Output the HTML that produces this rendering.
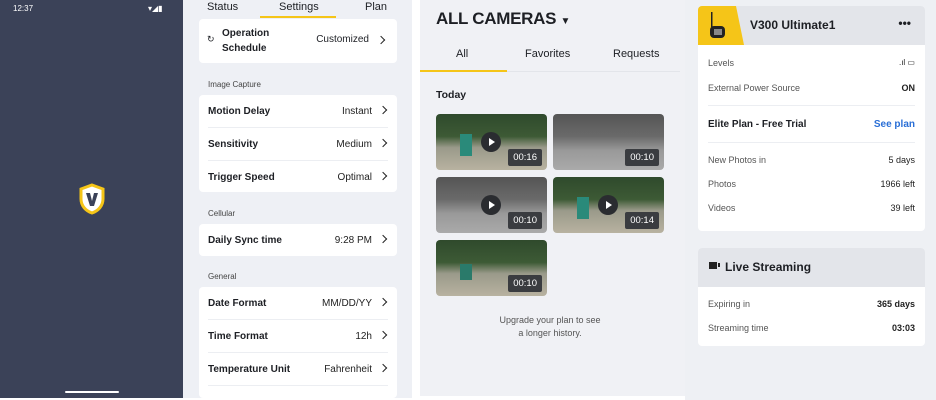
<!DOCTYPE html>
<html><head><meta charset="utf-8"><style>
*{margin:0;padding:0;box-sizing:border-box}
body{width:936px;height:400px;background:#fff;font-family:"Liberation Sans",sans-serif;position:relative;overflow:hidden;color:#1d1f24}
.a{position:absolute}
.dark{left:0;top:0;width:183px;height:398px;background:#3b4258}
.set{left:183px;top:0;width:229px;height:398px;background:#eef0f5}
.cam{left:420px;top:0;width:265px;height:396px;background:#f0f1f5}
.rt{left:685px;top:0;width:251px;height:400px;background:#eef0f4}
.card{background:#fff;border-radius:4px}
.row{position:absolute;left:9px;right:9px;height:33px;display:flex;align-items:center;font-size:10px;border-bottom:1px solid #eceef2}
.row b{font-weight:bold}
.row .v{margin-left:auto;margin-right:16px;color:#222}
.row .c{position:absolute;right:2px;top:12px;width:6px;height:6px;border-top:1.3px solid #222;border-right:1.3px solid #222;transform:rotate(45deg)}
.lbl{font-size:8px;color:#444}
.th{position:absolute;width:111px;height:56px;border-radius:4px;overflow:hidden}
.g{background:linear-gradient(180deg,#2f4a2c 0%,#3d5a35 40%,#9a9a8a 60%,#b8b2a0 100%)}
.gr{background:linear-gradient(180deg,#555 0%,#6a6a6a 40%,#999 65%,#aaa 100%)}
.dur{position:absolute;right:5px;bottom:4px;background:#3a3c40;color:#fff;font-size:9.5px;padding:3px 5px;border-radius:2px}
.play{position:absolute;left:45px;top:18px;width:20px;height:20px;border-radius:50%;background:#2a2c30}
.play:after{content:"";position:absolute;left:8px;top:6px;border-left:6px solid #fff;border-top:4px solid transparent;border-bottom:4px solid transparent}
.rr{position:absolute;left:10px;right:10px;font-size:9px;display:flex;color:#555}
.rr span:last-child{margin-left:auto;color:#222}
</style></head><body>
<div class="a dark">
 <div class="a" style="left:13px;top:4px;color:#fff;font-size:8px">12:37</div>
 <div class="a" style="left:148px;top:4px;color:#fff;font-size:8px">▾◢▮</div>
 <svg class="a" style="left:78px;top:183px" width="28" height="32" viewBox="0 0 28 32"><path d="M14 2 L25 6 V16 C25 23 20 28 14 30 C8 28 3 23 3 16 V6 Z" fill="#fff" stroke="#f5c518" stroke-width="3"/><path d="M8 10 L12 23 H16 L20 10 H16 L14 18 L12 10 Z" fill="#3b4258"/></svg>
 <div class="a" style="left:65px;top:391px;width:54px;height:2px;background:#fff;border-radius:1px"></div>
</div>
<div class="a set">
 <div class="a" style="left:24px;top:1px;font-size:11px">Status</div>
 <div class="a" style="left:96px;top:1px;font-size:11px">Settings</div>
 <div class="a" style="left:182px;top:1px;font-size:11px">Plan</div>
 <div class="a" style="left:77px;top:16px;width:76px;height:2px;background:#f5c518"></div>
 <div class="a card" style="left:16px;top:19px;width:198px;height:44px">
  <div class="a" style="left:8px;top:15px;font-size:9px">↻</div>
  <div class="a" style="left:23px;top:7px;font-size:10px;font-weight:bold;line-height:15px">Operation<br>Schedule</div>
  <div class="a" style="right:28px;top:15px;font-size:10px">Customized</div>
  <div class="a" style="right:13px;top:18px;width:6px;height:6px;border-top:1.3px solid #222;border-right:1.3px solid #222;transform:rotate(45deg)"></div>
 </div>
 <div class="a lbl" style="left:25px;top:80px">Image Capture</div>
 <div class="a card" style="left:16px;top:95px;width:198px;height:97px">
  <div class="row" style="top:0"><b>Motion Delay</b><span class="v">Instant</span><span class="c"></span></div>
  <div class="row" style="top:33px"><b>Sensitivity</b><span class="v">Medium</span><span class="c"></span></div>
  <div class="row" style="top:66px;border:0"><b>Trigger Speed</b><span class="v">Optimal</span><span class="c"></span></div>
 </div>
 <div class="a lbl" style="left:25px;top:209px">Cellular</div>
 <div class="a card" style="left:16px;top:224px;width:198px;height:32px">
  <div class="row" style="top:0;border:0"><b>Daily Sync time</b><span class="v">9:28 PM</span><span class="c"></span></div>
 </div>
 <div class="a lbl" style="left:25px;top:272px">General</div>
 <div class="a card" style="left:16px;top:287px;width:198px;height:111px">
  <div class="row" style="top:0"><b>Date Format</b><span class="v">MM/DD/YY</span><span class="c"></span></div>
  <div class="row" style="top:33px"><b>Time Format</b><span class="v">12h</span><span class="c"></span></div>
  <div class="row" style="top:66px"><b>Temperature Unit</b><span class="v">Fahrenheit</span><span class="c"></span></div>
 </div>
</div>
<div class="a cam">
 <div class="a" style="left:16px;top:9px;font-size:17px;font-weight:900;letter-spacing:-0.3px">ALL CAMERAS <span style="font-size:10px">▼</span></div>
 <div class="a" style="left:36px;top:48px;font-size:11px">All</div>
 <div class="a" style="left:105px;top:48px;font-size:11px">Favorites</div>
 <div class="a" style="left:193px;top:48px;font-size:11px">Requests</div>
 <div class="a" style="left:0;top:70px;width:87px;height:2px;background:#f5c518"></div>
 <div class="a" style="left:87px;top:71px;width:173px;height:1px;background:#e3e5ea"></div>
 <div class="a" style="left:16px;top:89px;font-size:10.5px;font-weight:bold">Today</div>
 <div class="th g" style="left:16px;top:114px"><div class="a" style="left:24px;top:20px;width:12px;height:22px;background:#2a8a7a"></div><div class="play"></div><div class="dur">00:16</div></div>
 <div class="th gr" style="left:133px;top:114px"><div class="dur">00:10</div></div>
 <div class="th gr" style="left:16px;top:177px"><div class="play"></div><div class="dur">00:10</div></div>
 <div class="th g" style="left:133px;top:177px"><div class="a" style="left:24px;top:20px;width:12px;height:22px;background:#2a8a7a"></div><div class="play"></div><div class="dur">00:14</div></div>
 <div class="th g" style="left:16px;top:240px"><div class="a" style="left:24px;top:24px;width:12px;height:16px;background:#2a7a6a"></div><div class="dur">00:10</div></div>
 <div class="a" style="left:60px;top:314px;width:140px;text-align:center;font-size:9px;color:#555;line-height:13px">Upgrade your plan to see<br>a longer history.</div>
</div>
<div class="a rt">
 <div class="a card" style="left:13px;top:6px;width:227px;height:225px;overflow:hidden">
  <div class="a" style="left:0;top:0;width:227px;height:39px;background:#e3e5ea"></div>
  <svg class="a" style="left:0;top:0" width="48" height="39"><path d="M0 0H38L46 39H0Z" fill="#f5c518"/><rect x="12" y="20" width="15" height="12" rx="4" fill="#222"/><rect x="13" y="6" width="1.5" height="15" fill="#222"/><rect x="16" y="23" width="8" height="6" fill="#888"/></svg>
  <div class="a" style="left:52px;top:12px;font-size:12px;font-weight:bold">V300 Ultimate1</div>
  <div class="a" style="right:14px;top:10px;font-size:12px;font-weight:bold">•••</div>
  <div class="rr" style="top:52px"><span>Levels</span><span style="font-size:8px">.ıl ▭</span></div>
  <div class="rr" style="top:77px"><span>External Power Source</span><span style="font-weight:bold">ON</span></div>
  <div class="a" style="left:10px;right:10px;top:99px;height:1px;background:#eceef2"></div>
  <div class="rr" style="top:113px;font-size:10px"><span style="color:#1d1f24;font-weight:bold">Elite Plan - Free Trial</span><span style="color:#2a6fd6;font-weight:bold">See plan</span></div>
  <div class="a" style="left:10px;right:10px;top:136px;height:1px;background:#eceef2"></div>
  <div class="rr" style="top:149px"><span>New Photos in</span><span>5 days</span></div>
  <div class="rr" style="top:173px"><span>Photos</span><span>1966 left</span></div>
  <div class="rr" style="top:197px"><span>Videos</span><span>39 left</span></div>
 </div>
 <div class="a card" style="left:13px;top:248px;width:227px;height:98px;overflow:hidden">
  <div class="a" style="left:0;top:0;width:227px;height:39px;background:#e3e5ea"></div>
  <div class="a" style="left:11px;top:14px;width:8px;height:7px;background:#222"></div>
  <div class="a" style="left:20px;top:15px;width:2px;height:4px;background:#222"></div>
  <div class="a" style="left:27px;top:12px;font-size:12px;font-weight:bold">Live Streaming</div>
  <div class="rr" style="top:51px"><span>Expiring in</span><span style="font-weight:bold">365 days</span></div>
  <div class="rr" style="top:75px"><span>Streaming time</span><span style="font-weight:bold">03:03</span></div>
 </div>
</div>
</body></html>
